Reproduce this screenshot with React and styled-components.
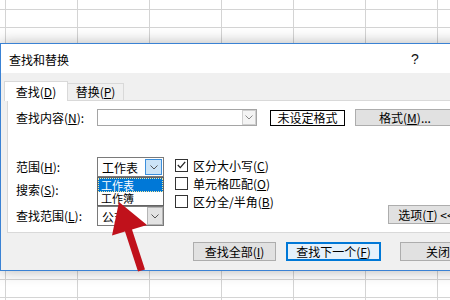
import React from 'react';
import styled, { createGlobalStyle } from 'styled-components';

const Global = createGlobalStyle`
  html, body { margin: 0; padding: 0; background: #fff; }
  body {
    width: 450px; height: 300px; overflow: hidden;
    font-family: "Noto Sans CJK SC", "Liberation Sans", sans-serif;
    font-size: 12px; color: #000;
  }
  * { box-sizing: border-box; }
`;

const Sheet = styled.div`
  position: relative;
  width: 450px;
  height: 300px;
  overflow: hidden;
  padding-top: 43px;
  background-color: #fff;
  background-image:
    linear-gradient(to right, #d4d4d4 1px, transparent 1px),
    linear-gradient(to bottom, #d4d4d4 1px, transparent 1px);
  background-size: 72px 100%, 100% 18px;
  background-position: 5px 0, 0 9px;
`;

const Dialog = styled.div`
  width: 476px;
  height: 228px;
  border: 1px solid #3a82d4;
  border-right: none;
  background: #f0f0f0;
  box-shadow: 0 0 14px rgba(0, 0, 0, 0.3);
  display: flex;
  flex-direction: column;
`;

const TitleBar = styled.div`
  height: 29px;
  background: #fff;
  display: flex;
  align-items: center;
  padding-left: 8px;
  padding-right: 46px;
  flex-shrink: 0;
`;

const Title = styled.span`
  font-size: 12px;
  flex: 1;
  margin-top: 2px;
`;

const HelpButton = styled.span`
  width: 30px;
  height: 29px;
  display: flex;
  align-items: center;
  justify-content: center;
  font-family: "Liberation Sans", sans-serif;
  font-size: 14px;
  color: #111;
`;

const TabRow = styled.div`
  height: 27px;
  display: flex;
  align-items: flex-end;
  padding-left: 3px;
  flex-shrink: 0;
`;

const Tab = styled.div`
  position: relative;
  z-index: 1;
  width: ${p => (p.$active ? 64 : 56)}px;
  height: ${p => (p.$active ? 20 : 17)}px;
  margin-bottom: ${p => (p.$active ? -1 : 0)}px;
  background: ${p => (p.$active ? '#fff' : '#f0f0f0')};
  border: 1px solid #d9d9d9;
  border-bottom: none;
  ${p => (p.$active ? '' : 'border-left: none;')}
  display: flex;
  align-items: center;
  justify-content: center;
  font-size: 12px;
  line-height: 1;
`;

const Key = styled.span`
  text-decoration: underline;
  text-underline-offset: 1px;
`;

const Panel = styled.div`
  margin-left: 6px;
  height: 133px;
  background: #fff;
  border: 1px solid #d9d9d9;
  border-right: none;
  padding: 8px 0 0 8px;
  flex-shrink: 0;
`;

const FindRow = styled.div`
  display: flex;
  align-items: center;
  height: 17px;
`;

const Label = styled.span`
  width: 81px;
  flex-shrink: 0;
  white-space: nowrap;
  font-size: 12px;
  line-height: 18px;
`;

const Combo = styled.div`
  position: relative;
  display: flex;
  align-items: stretch;
  width: ${p => p.$w}px;
  height: ${p => p.$h}px;
  border: 1px solid ${p => p.$border || '#7a7a7a'};
  background: #fff;
  flex-shrink: 0;
`;

const ComboText = styled.span`
  flex: 1;
  padding-left: 4px;
  display: flex;
  align-items: center;
  font-size: 12px;
  white-space: nowrap;
  overflow: hidden;
`;

const ArrowBox = styled.span`
  width: ${p => p.$w}px;
  margin: ${p => p.$inset}px;
  display: flex;
  align-items: center;
  justify-content: center;
  background: ${p => p.$bg};
  border: 1px solid ${p => p.$border};
`;

const Chevron = ({ color = '#666' }) => (
  <svg width="8" height="5" viewBox="0 0 8 5">
    <path d="M0.5 0.5 L4 4 L7.5 0.5" fill="none" stroke={color} strokeWidth="1" />
  </svg>
);

const FormatState = styled.div`
  margin-left: 13px;
  width: 75px;
  height: 16px;
  border: 1px solid #000;
  background: #fff;
  display: flex;
  align-items: center;
  justify-content: center;
  font-size: 12px;
  flex-shrink: 0;
`;

const Button = styled.div`
  width: ${p => p.$w}px;
  height: ${p => p.$h || 19}px;
  margin-left: ${p => p.$ml || 0}px;
  background: ${p => (p.$default ? '#e5f1fb' : '#e1e1e1')};
  border: ${p => (p.$default ? '2px solid #0078d7' : '1px solid #adadad')};
  display: flex;
  align-items: center;
  justify-content: center;
  font-size: 12px;
  white-space: nowrap;
  flex-shrink: 0;
`;

const OptionsArea = styled.div`
  margin-top: 31px;
  display: flex;
  align-items: flex-start;
  height: 69px;
`;

const ScopeGrid = styled.div`
  display: grid;
  grid-template-columns: 81px 67px;
  grid-template-rows: 24px 25px 20px;
  align-items: start;
`;

const GridLabel = styled.span`
  font-size: 12px;
  line-height: 20px;
  white-space: nowrap;
  margin-top: ${p => p.$mt || 0}px;
`;

const DropList = styled.div`
  position: absolute;
  z-index: 3;
  left: -1px;
  top: 19px;
  width: 67px;
  height: 29px;
  background: #fff;
  border: 1px solid #646464;
  display: flex;
  flex-direction: column;
`;

const DropItem = styled.div`
  height: 13.5px;
  display: flex;
  align-items: center;
  line-height: 12px;
  padding-left: 3px;
  font-size: 11px;
  background: ${p => (p.$selected ? '#0078d7' : '#fff')};
  color: ${p => (p.$selected ? '#fff' : '#000')};
  outline: ${p => (p.$selected ? '1px dotted #f3e9a0' : 'none')};
  outline-offset: -1px;
  white-space: nowrap;
`;

const CheckColumn = styled.div`
  margin-left: 11px;
  margin-top: -1px;
  display: flex;
  flex-direction: column;
`;

const CheckRow = styled.div`
  height: 18px;
  display: flex;
  align-items: center;
  font-size: 12px;
  white-space: nowrap;
`;

const Box = styled.span`
  width: 13px;
  height: 13px;
  border: 1px solid #333;
  background: #fff;
  margin-right: 5px;
  display: flex;
  align-items: center;
  justify-content: center;
`;

const OptionsButton = styled(Button)`
  align-self: flex-end;
  margin-left: auto;
  margin-right: 12px;
  margin-bottom: 2px;
`;

const Footer = styled.div`
  display: flex;
  padding-top: 9px;
  padding-left: 192px;
`;

const Arrow = styled.svg`
  position: absolute;
  left: 0;
  top: 0;
  z-index: 10;
  pointer-events: none;
`;

const Check = () => (
  <svg width="9" height="8" viewBox="0 0 9 8">
    <path d="M0.8 4 L3.3 6.6 L8.2 0.8" fill="none" stroke="#222" strokeWidth="1.3" />
  </svg>
);

export default function App() {
  return (
    <>
      <Global />
      <Sheet>
        <Dialog>
          <TitleBar>
            <Title>查找和替换</Title>
            <HelpButton>?</HelpButton>
          </TitleBar>
          <TabRow>
            <Tab $active>查找(<Key>D</Key>)</Tab>
            <Tab>替换(<Key>P</Key>)</Tab>
          </TabRow>
          <Panel>
            <FindRow>
              <Label>查找内容(<Key>N</Key>):</Label>
              <Combo $w={160} $h={17} $border="#a5a5a5">
                <ComboText />
                <ArrowBox $w={14} $inset={0} $bg="#f4f4f4" $border="#cfcfcf">
                  <Chevron color="#8a8a8a" />
                </ArrowBox>
              </Combo>
              <FormatState>未设定格式</FormatState>
              <Button $w={100} $h={17} $ml={10}>格式(<Key>M</Key>)...</Button>
            </FindRow>
            <OptionsArea>
              <ScopeGrid>
                <GridLabel>范围(<Key>H</Key>):</GridLabel>
                <Combo $w={67} $h={20}>
                  <ComboText>工作表</ComboText>
                  <ArrowBox $w={17} $inset={1} $bg="#cce4f7" $border="#3c8fdc">
                    <Chevron color="#555" />
                  </ArrowBox>
                  <DropList>
                    <DropItem $selected>工作表</DropItem>
                    <DropItem>工作簿</DropItem>
                  </DropList>
                </Combo>
                <GridLabel $mt={-1}>搜索(<Key>S</Key>):</GridLabel>
                <Combo $w={67} $h={20} />
                <GridLabel>查找范围(<Key>L</Key>):</GridLabel>
                <Combo $w={67} $h={20}>
                  <ComboText>公式</ComboText>
                  <ArrowBox $w={16} $inset={0} $bg="#e3e3e3" $border="#b5b5b5">
                    <Chevron color="#555" />
                  </ArrowBox>
                </Combo>
              </ScopeGrid>
              <CheckColumn>
                <CheckRow><Box><Check /></Box>区分大小写(<Key>C</Key>)</CheckRow>
                <CheckRow><Box />单元格匹配(<Key>O</Key>)</CheckRow>
                <CheckRow><Box />区分全/半角(<Key>B</Key>)</CheckRow>
              </CheckColumn>
              <OptionsButton $w={76} $h={19}>选项(<Key>T</Key>) &lt;&lt;</OptionsButton>
            </OptionsArea>
          </Panel>
          <Footer>
            <Button $w={83}>查找全部(<Key>I</Key>)</Button>
            <Button $w={95} $ml={10} $default>查找下一个(<Key>F</Key>)</Button>
            <Button $w={76} $ml={19}>关闭</Button>
          </Footer>
        </Dialog>
        <Arrow width="450" height="300" viewBox="0 0 450 300">
          <polygon
            points="119,202 147,225 132,229.5 145,269.5 138,271.5 125,231.5 112,235.5"
            fill="#c0111b"
          />
        </Arrow>
      </Sheet>
    </>
  );
}
